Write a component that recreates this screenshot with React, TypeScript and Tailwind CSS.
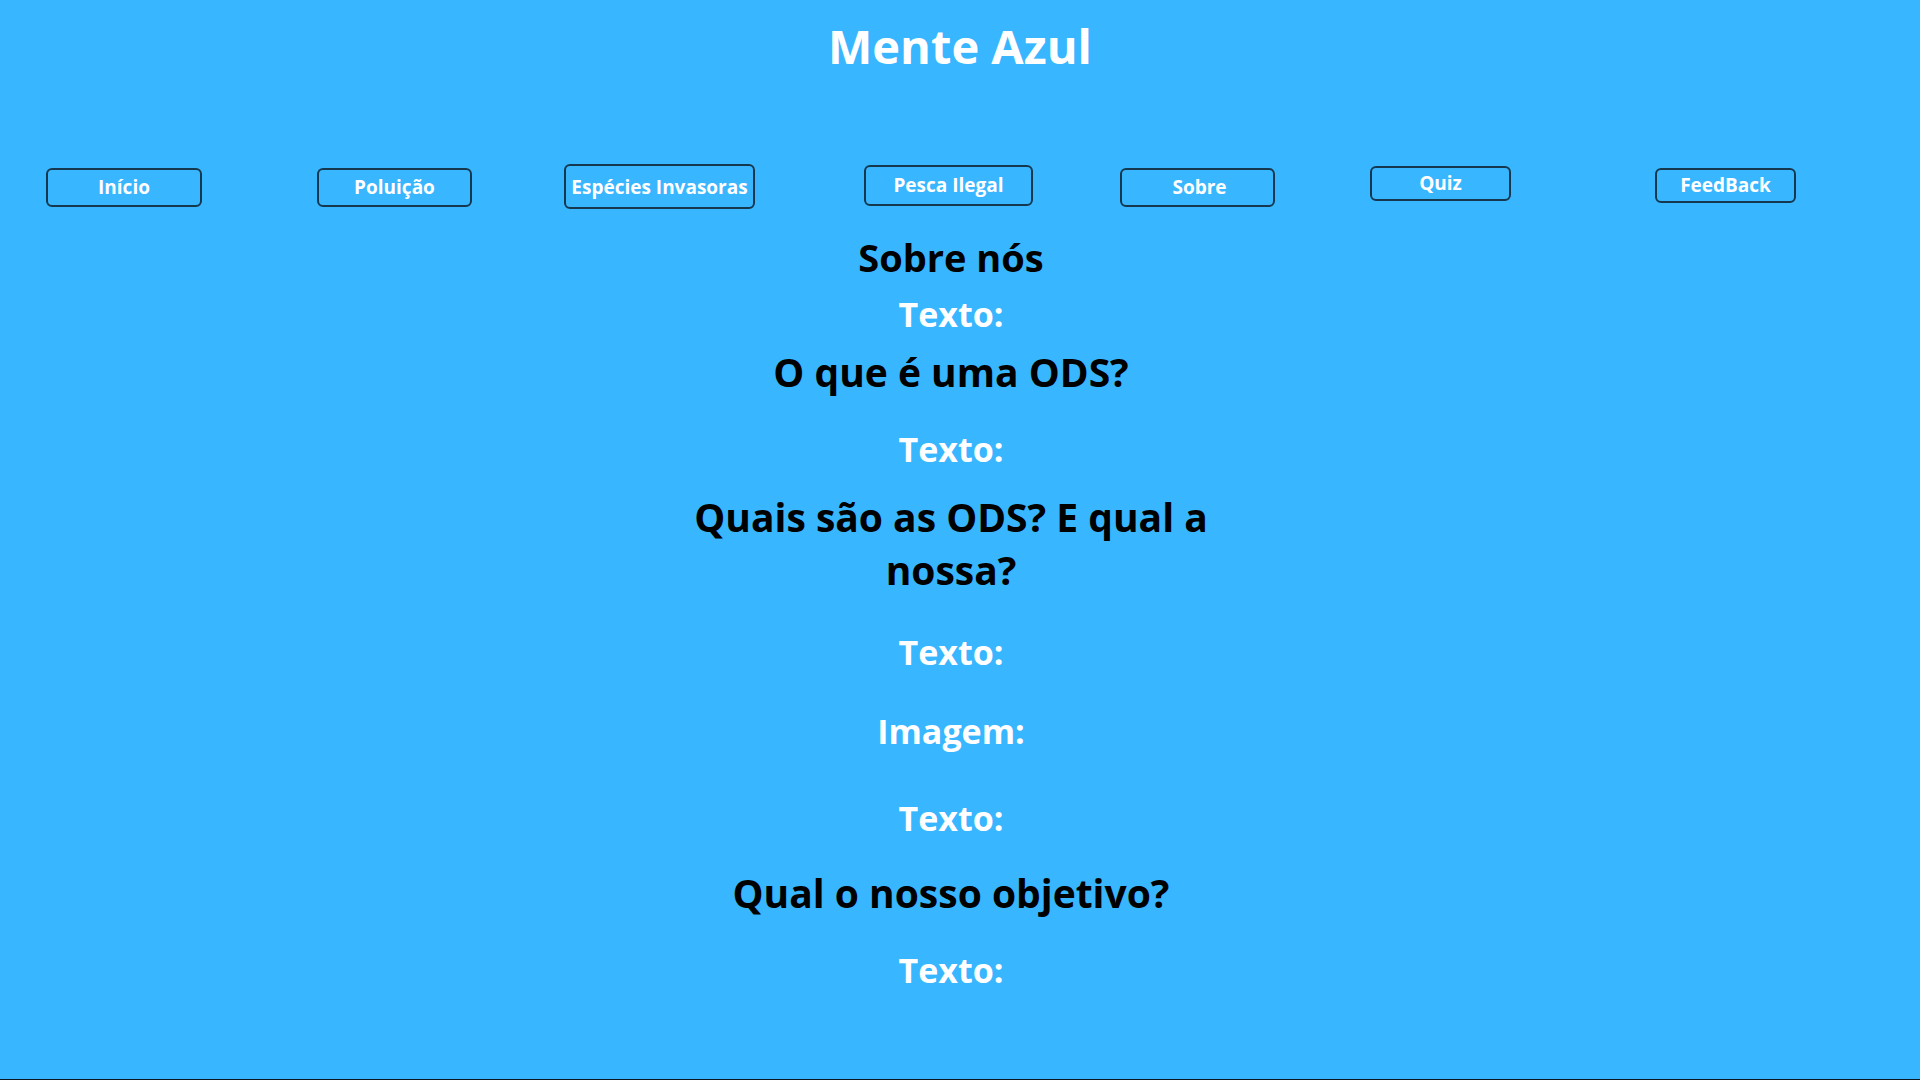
import React from 'react';

const font = { fontFamily: '"Open Sans", "Noto Sans", sans-serif' };

interface NavItem {
  label: string;
  className: string;
}

const navItems: NavItem[] = [
  { label: 'Início', className: 'ml-[46px] mt-[4px] w-[156px] h-[39px]' },
  { label: 'Poluição', className: 'ml-[115px] mt-[4px] w-[155px] h-[39px]' },
  { label: 'Espécies Invasoras', className: 'ml-[92px] mt-0 w-[191px] h-[45px] pt-[2px]' },
  { label: 'Pesca Ilegal', className: 'ml-[109px] mt-[1px] w-[169px] h-[41px]' },
  { label: 'Sobre', className: 'ml-[87px] mt-[4px] w-[155px] h-[39px] pl-[4px]' },
  { label: 'Quiz', className: 'ml-[95px] mt-[2px] w-[141px] h-[35px]' },
  { label: 'FeedBack', className: 'ml-[144px] mt-[4px] w-[141px] h-[35px]' },
];

const NavButton: React.FC<NavItem> = ({ label, className }) => (
  <button
    className={`${className} flex shrink-0 items-center justify-center rounded-[6px] border-2 border-[#16384f] bg-transparent text-[19px] font-bold leading-none text-white`}
  >
    {label}
  </button>
);

export default function App() {
  return (
    <div
      className="flex h-screen w-full flex-col overflow-hidden border-b border-[#0a1620] bg-[#38b6ff]"
      style={font}
    >
      <h1 className="mt-[23px] text-center text-[47px] font-bold leading-[47px] text-white">
        Mente Azul
      </h1>

      <nav className="mt-[94px] flex items-start">
        {navItems.map((item) => (
          <NavButton key={item.label} {...item} />
        ))}
      </nav>

      <main className="flex flex-col items-center pr-[18px] text-center font-bold leading-none">
        <h2 className="mt-[29px] text-[38px] text-black">Sobre nós</h2>
        <p className="mt-[21px] text-[34px] text-white">Texto:</p>

        <h2 className="mt-[21px] text-[39px] text-black">O que é uma ODS?</h2>
        <p className="mt-[41px] text-[34px] text-white">Texto:</p>

        <h2 className="mt-[24px] max-w-[560px] text-[39px] leading-[53px] text-black">
          Quais são as ODS? E qual a nossa?
        </h2>
        <p className="mt-[39px] text-[34px] text-white">Texto:</p>
        <p className="mt-[45px] text-[34px] text-white">Imagem:</p>
        <p className="mt-[53px] text-[34px] text-white">Texto:</p>

        <h2 className="mt-[38px] text-[39px] text-black">Qual o nosso objetivo?</h2>
        <p className="mt-[41px] text-[34px] text-white">Texto:</p>
      </main>
    </div>
  );
}
